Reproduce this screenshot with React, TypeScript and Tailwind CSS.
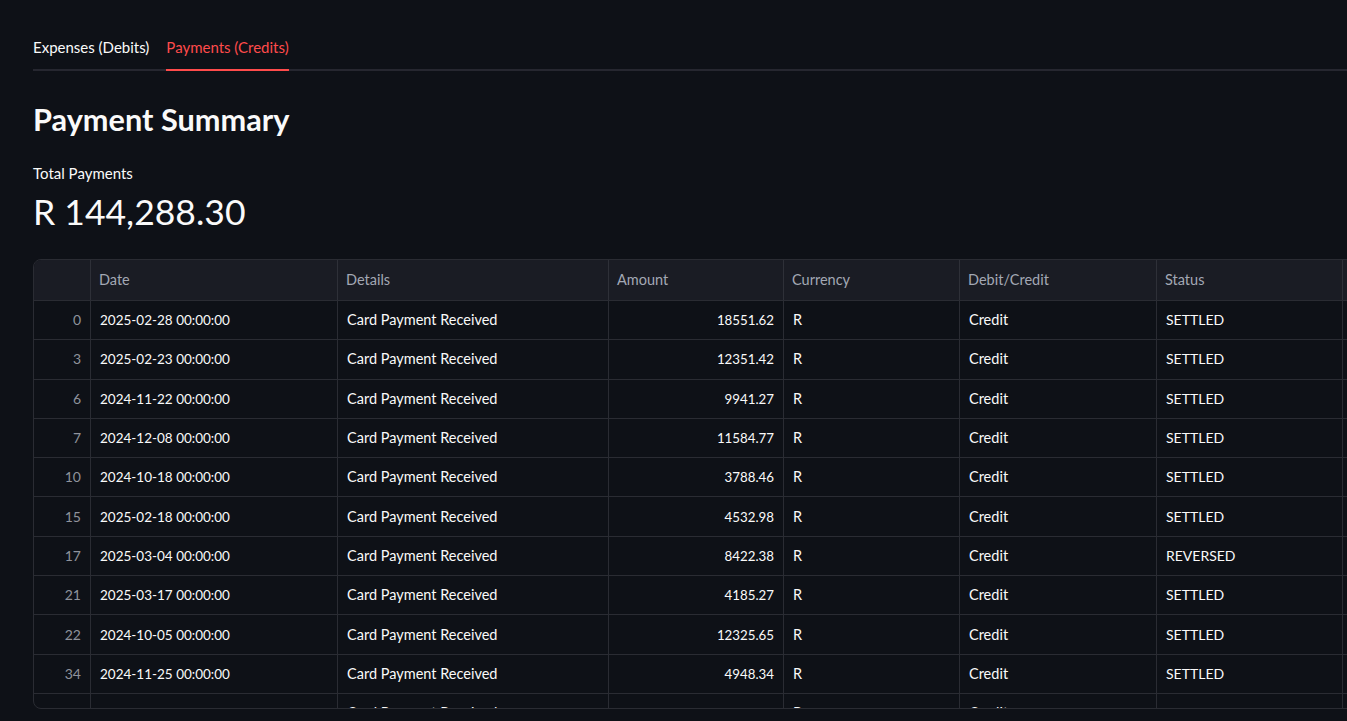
import React from "react";

const rows = [
  ["0", "2025-02-28 00:00:00", "18551.62", "SETTLED"],
  ["3", "2025-02-23 00:00:00", "12351.42", "SETTLED"],
  ["6", "2024-11-22 00:00:00", "9941.27", "SETTLED"],
  ["7", "2024-12-08 00:00:00", "11584.77", "SETTLED"],
  ["10", "2024-10-18 00:00:00", "3788.46", "SETTLED"],
  ["15", "2025-02-18 00:00:00", "4532.98", "SETTLED"],
  ["17", "2025-03-04 00:00:00", "8422.38", "REVERSED"],
  ["21", "2025-03-17 00:00:00", "4185.27", "SETTLED"],
  ["22", "2024-10-05 00:00:00", "12325.65", "SETTLED"],
  ["34", "2024-11-25 00:00:00", "4948.34", "SETTLED"],
  ["35", "2024-11-02 00:00:00", "5210.11", "SETTLED"],
];

const cols = "grid grid-cols-[57px_247px_271px_175px_176px_197px_186px_200px]";
const cell = "flex items-center border-r border-[#2a2c33] px-[9px] leading-[16px]";

export default function App() {
  return (
    <div className="min-h-[721px] w-[1347px] overflow-hidden bg-[#0e1117] text-[#fafafa]" style={{ fontFamily: "Lato, 'Noto Sans', sans-serif" }}>
      <div className="pl-[33px] pt-[37px]">
        <div className="flex border-b-2 border-[#262730]">
          <div className="mr-[17px] pb-[12px] text-[15px] leading-[20px]">Expenses (Debits)</div>
          <div className="-mb-[2px] border-b-2 border-[#ff4b4b] pb-[12px] text-[15px] leading-[20px] text-[#ff4b4b]">Payments (Credits)</div>
        </div>
        <h1 className="mt-[30px] text-[30.7px] font-bold leading-[38px]">Payment Summary</h1>
        <div className="mt-[25px] text-[15px] leading-[18px]">Total Payments</div>
        <div className="mt-[9px] text-[35.5px] leading-[42px]">R 144,288.30</div>
        <div className="mt-[26px] h-[450px] w-[1400px] overflow-hidden rounded-[8px] border border-[#2a2c33] text-[14.5px]">
          <div className={`${cols} h-[40px] bg-[#1a1c24] text-[#a3a8b4]`}>
            <div className="border-r border-[#2e3038]" />
            {["Date", "Details", "Amount", "Currency", "Debit/Credit", "Status", ""].map((h, i) => (
              <div key={i} className="flex items-center border-r border-[#2e3038] px-[8px]">{h}</div>
            ))}
          </div>
          {rows.map((r) => (
            <div key={r[0]} className={`${cols} h-[39.3px] border-t border-[#2a2c33]`}>
              <div className={`${cell} justify-end text-[14px] text-[#8f939c]`}>{r[0]}</div>
              <div className={`${cell} text-[13.5px]`}>{r[1]}</div>
              <div className={cell}>Card Payment Received</div>
              <div className={`${cell} justify-end text-[13.3px]`}>{r[2]}</div>
              <div className={cell}>R</div>
              <div className={cell}>Credit</div>
              <div className={`${cell} text-[14px]`}>{r[3]}</div>
              <div className="border-r border-[#2a2c33]" />
            </div>
          ))}
        </div>
      </div>
    </div>
  );
}
